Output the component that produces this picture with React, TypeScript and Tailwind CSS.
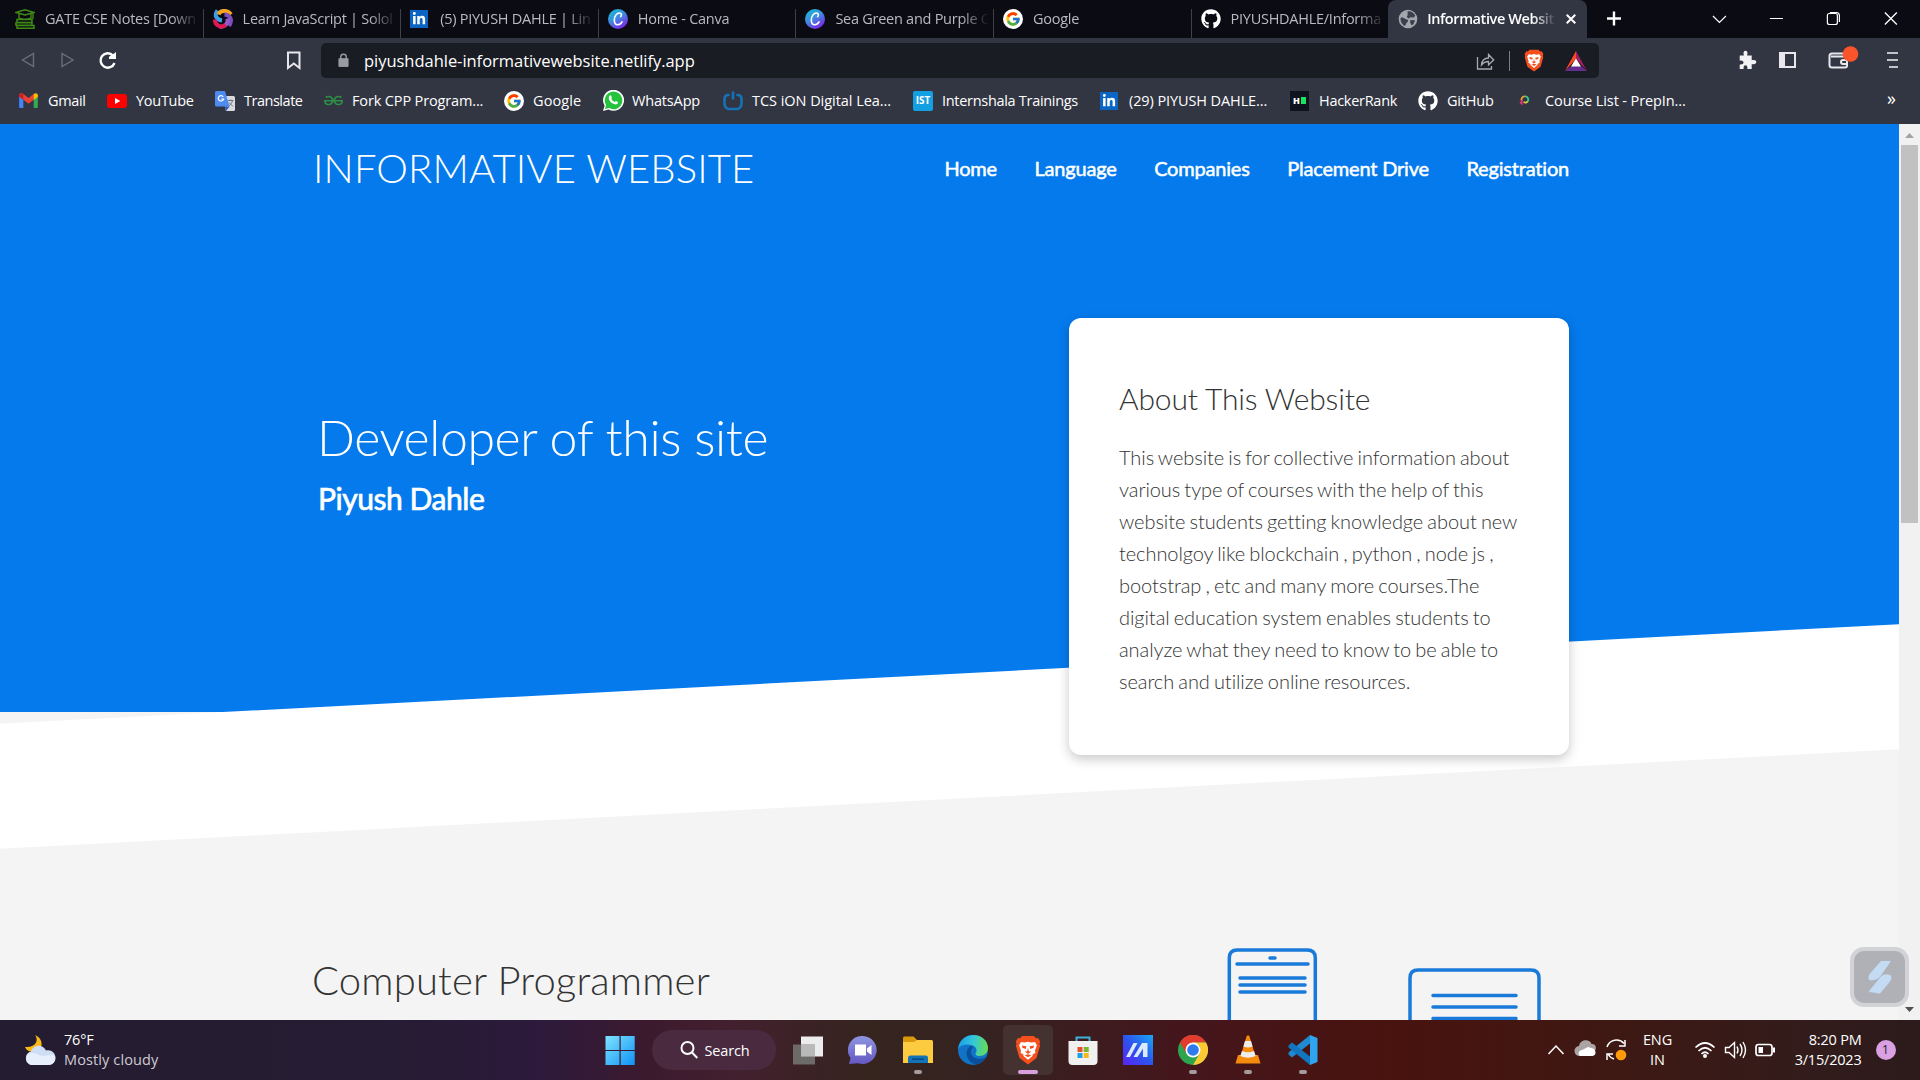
import React, { ReactNode } from "react";
import { FaGithub, FaLinkedinIn } from "react-icons/fa";
import { FcGoogle } from "react-icons/fc";
import { SiGeeksforgeeks } from "react-icons/si";

type P = { className?: string };

const Google = () => (
  <span className="flex size-5 items-center justify-center rounded-full bg-white">
    <FcGoogle className="size-4" />
  </span>
);
const LinkedIn = () => (
  <span className="flex h-[18px] w-[18px] items-center justify-center bg-[#0a66c2] text-white">
    <FaLinkedinIn className="size-[14px]" />
  </span>
);
const Canva = () => (
  <svg viewBox="0 0 20 20" className="size-5">
    <defs>
      <linearGradient id="cv" x1="0" y1="0" x2="0.6" y2="1">
        <stop offset="0" stopColor="#0cc3cc" />
        <stop offset="0.5" stopColor="#3d8fe0" />
        <stop offset="1" stopColor="#7a2ae8" />
      </linearGradient>
    </defs>
    <circle cx="10" cy="10" r="10" fill="url(#cv)" />
    <path d="M12.700 7.700c1.300-1.700.8-3.700-1.200-3.700-2.900 0-5.200 3.400-5.200 7 0 2.800 1.300 4.700 3.500 4.700 1.700 0 3.200-1.100 4.200-2.900" fill="none" stroke="#fff" strokeWidth="1.600" strokeLinecap="round" />
  </svg>
);
const Books = () => (
  <svg viewBox="0 0 20 20" className="size-5" fill="none" stroke="#3f8a14" strokeWidth="1.400">
    <path d="M1 3.500 10 .8l9 2.700-9 2.500zM4 4.600v4.600c3 1.500 9 1.500 12 0V4.600M18 4v6" />
    <path d="M2 10.500h15v3H2zM1 13.700h16v2.600H1zM2 16.500h17v2.800H2z" strokeWidth="1.500" />
  </svg>
);
const Solo = () => (
  <svg viewBox="0 0 20 20" className="size-5" fill="none" strokeWidth="4">
    <path d="M9 11.500C3 10.500 1 6 4.500 1.500" stroke="#3aa0e8" />
    <path d="M5.500 5.500C7 1 14.500 .5 18 5.500" stroke="#f7a420" />
    <path d="M11.500 5.500c6 .5 8.500 5.500 4.500 11.500" stroke="#7b4fc0" />
    <path d="M14.500 9.500c1 5-2.500 8.500-8 8.300" stroke="#9a55c8" />
    <path d="M12.500 15.800C8 19.500 2 16.500 1.800 10.500" stroke="#e0184f" />
  </svg>
);
const Globe = () => (
  <svg viewBox="0 0 20 20" className="size-5">
    <circle cx="10" cy="10" r="9.300" fill="#a3a6ad" />
    <path d="M2.500 9c1.500-1 3.500 0 5 1 2 .3 3.500 1.500 2 3-1.500 1-1.200 2-2 3.200-.8 1-1.500.5-2 0C3.500 14.500 2.300 12 2.500 9zM9.500 2.500c3-.7 6.500 1 7.700 4l-1.200 2-3.500-.3-1.800 1.300-2-1.500 1-2zM12.500 11l4.500.2-1.500 4-2 1-1.500-3z" fill="#3d404c" />
  </svg>
);
const Lion = ({ className }: P) => (
  <svg viewBox="0 0 24 28" className={className}>
    <path d="M6.500 1h11l2 2 1.800-.2L23.500 6l-.8 2 .6 2-3.300 11.500L12 27.500 4 21.500.7 10l.6-2-.8-2 2.200-3.200L4.500 3z" fill="#f4501e" />
    <path d="M5.500 6.500 9 7l3-.8L15 7l3.500-.5L20.300 9.500l-1.800 5.300.5 1.700-3 2 .5.8L12 23l-4.500-3.700.5-.8-3-2 .5-1.700L3.700 9.500z" fill="#fff" />
    <path d="m6.500 9.700 4 .9-.6 2.400-3.200-1zM17.500 9.700l-4 .9.600 2.400 3.200-1zM9 15.500l2.300-.4L12 12l.7 3.100 2.300.4-3 2.200zM8.800 18.800 12 20.800l3.200-2-3.200-.9z" fill="#f4501e" />
  </svg>
);
const Gmail = () => (
  <svg viewBox="0 0 20 16" className="h-[15px] w-[19px]">
    <path d="M0 2v12.500A1.300 1.300 0 0 0 1.300 16H4.500V7z" fill="#4285f4" />
    <path d="M20 2v12.500a1.300 1.300 0 0 1-1.300 1.500H15.500V7z" fill="#34a853" />
    <path d="M0 2.300C0 .3 2.300-.6 3.800.5L10 5.200 16.200.5l-.7 6.800L10 11.400 4.500 7.300 0 4z" fill="#ea4335" />
    <path d="M15.500 1C17.500-.7 20 .3 20 2.300V4l-4.500 3.400z" fill="#fbbc04" />
    <path d="M0 2.300V4l4.500 3.300V1C2.500-.6 0 .3 0 2.300z" fill="#c5221f" />
  </svg>
);
const YouTube = () => (
  <svg viewBox="0 0 20 14" className="h-[14px] w-5">
    <rect width="20" height="14" rx="3" fill="#f00" />
    <path d="m8 4 5.300 3L8 10z" fill="#fff" />
  </svg>
);
const Translate = () => (
  <svg viewBox="0 0 20 20" className="size-5">
    <path d="M7 5h11.500A1.500 1.500 0 0 1 20 6.500v12a1.500 1.500 0 0 1-1.500 1.500H11z" fill="#d7dade" />
    <path d="M1.500 0H10l4.500 15.500h-13A1.500 1.500 0 0 1 0 14V1.500A1.500 1.500 0 0 1 1.500 0z" fill="#4d8bf0" />
    <path d="M11 20l3.500-4.500H9.800z" fill="#2a56b5" />
    <path d="M8.200 5.800A2.700 2.700 0 1 0 8.600 8H6.200" fill="none" stroke="#fff" strokeWidth="1.200" />
    <path d="M13 9.500h5.500M15.700 8.500v1M17.500 9.500c-.4 2.500-2 4-3.300 5M14 11.500l4 4" fill="none" stroke="#6a7280" strokeWidth="1" />
  </svg>
);
const WhatsApp = () => (
  <svg viewBox="0 0 20 20" className="size-[21px]">
    <path d="M0 20l1.500-5A10 10 0 1 1 5.300 18.600z" fill="#fff" />
    <path d="M1.900 18.100l1-3.700a8.400 8.400 0 1 1 2.900 2.800z" fill="#25c33c" />
    <path d="M6.300 5.500c.5-.6 1.200-.5 1.500.1l.7 1.500c.1.400-.6 1-.6 1.300.6 1.400 1.700 2.400 3.200 3 .4 0 1-1 1.300-.9l1.700.9c.4.300.2 1.300-.3 1.700-1.300 1.100-3 .6-4.500-.2-1.700-1-3-2.400-3.600-4.200-.4-1.200-.1-2.500.6-3.200z" fill="#fff" />
  </svg>
);
const Power = () => (
  <svg viewBox="0 0 20 20" className="size-5" fill="none" stroke="#1473b8" strokeWidth="2.600" strokeLinecap="round">
    <path d="M5.500 4Q1.500 4 1.500 8v4c0 4 2 6 5 6h7c3 0 5-2 5-6V8q0-4-4-4M10 1.500v6" />
  </svg>
);
const Prep = () => (
  <svg viewBox="0 0 12 12" className="mx-1 size-[11px]" fill="none" strokeWidth="2">
    <path d="M3 6.500a3.500 3.500 0 0 1 3.500-5" stroke="#f0a030" />
    <path d="M6.500 1.500a3.500 3.500 0 0 1 3 5.500" stroke="#30c890" />
    <path d="M9.500 7A3.500 3.500 0 0 1 5 7.700" stroke="#d8d040" />
    <path d="M3 5.500v4L1 8" stroke="#e03080" />
  </svg>
);

const tabs: { icon: ReactNode; label: string }[] = [
  { icon: <Books />, label: "GATE CSE Notes [Down" },
  { icon: <Solo />, label: "Learn JavaScript | Solol" },
  { icon: <LinkedIn />, label: "(5) PIYUSH DAHLE | Lin" },
  { icon: <Canva />, label: "Home - Canva" },
  { icon: <Canva />, label: "Sea Green and Purple C" },
  { icon: <Google />, label: "Google" },
  { icon: <FaGithub className="size-5 text-white" />, label: "PIYUSHDAHLE/Informa" },
];

const marks: { icon: ReactNode; label: string; w: string; x: string }[] = [
  { icon: <Gmail />, label: "Gmail", x: "w-[88px]", w: "tracking-[-0.35px]" },
  { icon: <YouTube />, label: "YouTube", x: "w-[108px]", w: "tracking-[-0.28px]" },
  { icon: <Translate />, label: "Translate", x: "w-[109px]", w: "tracking-[-0.48px]" },
  { icon: <SiGeeksforgeeks className="size-[19px] text-[#2f8d46]" />, label: "Fork CPP Program...", x: "w-[180px]", w: "ml-[-1px] tracking-[-0.14px]" },
  { icon: <Google />, label: "Google", x: "w-[99px]", w: "tracking-[0.1px]" },
  { icon: <WhatsApp />, label: "WhatsApp", x: "w-[120px]", w: "tracking-[-0.16px]" },
  { icon: <Power />, label: "TCS iON Digital Lea...", x: "w-[190px]", w: "tracking-[-0.04px]" },
  { icon: <span className="flex size-5 items-center justify-center rounded-[2px] bg-[#12a0e2] font-['Open_Sans'] text-[10px] font-bold text-white">IST</span>, label: "Internshala Trainings", x: "w-[187px]", w: "tracking-[-0.3px]" },
  { icon: <LinkedIn />, label: "(29) PIYUSH DAHLE...", x: "w-[190px]", w: "tracking-[-0.1px]" },
  { icon: <span className="flex h-5 w-[19px] items-center justify-center gap-px bg-[#0e141e] font-['Open_Sans'] text-[9px] font-extrabold text-white">H<i className="h-[7px] w-[5px] bg-[#1ae35f]" /></span>, label: "HackerRank", x: "w-[128px]", w: "tracking-[-0.28px]" },
  { icon: <FaGithub className="size-5 text-white" />, label: "GitHub", x: "w-[97px]", w: "tracking-[-0.2px]" },
  { icon: <Prep />, label: "Course List - PrepIn...", x: "w-[190px]", w: "ml-[1px] tracking-[-0.1px]" },
];

function Browser() {
  return (
    <header className="h-[124px] bg-[#323542] font-['Open_Sans',sans-serif] text-[14.500px] text-white">
      <div className="flex h-[38px] bg-[#0b0b14] pl-[6px]">
        {tabs.map((t, i) => (
          <div key={i} className="flex w-[197.600px] shrink-0 items-center pl-[9px]">
            <span className="flex w-[30px] shrink-0 items-center">{t.icon}</span>
            <span className="h-6 w-[154px] overflow-hidden whitespace-nowrap leading-[24px] tracking-[-0.26px] text-[#b9babf] [mask-image:linear-gradient(to_right,#000_82%,transparent)]">{t.label}</span>
            {i < 6 && <span className="ml-auto mt-auto h-[29px] w-px bg-[#3f4149]" />}
          </div>
        ))}
        <div className="-ml-px flex w-[199px] shrink-0 items-center rounded-t-lg bg-[#323542] pl-[10px]">
          <Globe />
          <span className="ml-[9px] h-6 w-[129px] overflow-hidden whitespace-nowrap leading-[24px] font-semibold tracking-[-0.4px] [mask-image:linear-gradient(to_right,#000_82%,transparent)]">Informative Websit</span>
          <svg viewBox="0 0 10 10" className="ml-[10px] size-[10px]" stroke="#fff" strokeWidth="2"><path d="M.7.700l8.600 8.600M9.300.7.700 9.300" /></svg>
        </div>
        <svg viewBox="0 0 333 38" className="h-[38px] w-[333px]" fill="none" stroke="#fff">
          <path d="M20 18.500h14M27 11.500v14" strokeWidth="2.400" />
          <path d="m126 16 6.500 6.500L139 16M183 18.500h13" strokeWidth="1.200" />
          <path d="M240.500 15.500q0-2 2-2h6q2 0 2 2v7q0 2-2 2h-6q-2 0-2-2zM243 12.500h6.500q3 0 3 3V22" strokeWidth="1.200" />
          <path d="m298 12.500 12 12M310 12.500l-12 12" strokeWidth="1.300" />
        </svg>
      </div>
      <div className="flex h-[45px] items-center">
        <svg viewBox="0 0 321 45" className="h-[45px] w-[321px]" fill="none">
          <path d="M33.500 15.500v13l-11-6.500zM62 15.500v13l11-6.500z" stroke="#6b6e79" strokeWidth="1.400" />
          <path d="M113 17.500a7.200 7.200 0 1 0 1.500 7.500" stroke="#fff" strokeWidth="2.400" />
          <path d="M116 14v7h-7a3.500 3.500 0 0 1 3-4z" fill="#fff" />
          <path d="M288 14.500h11.500V30l-5.700-4.500L288 30z" stroke="#e8e8ec" strokeWidth="2" />
        </svg>
        <div className="flex h-[35px] w-[1278px] items-center rounded-[5px] bg-[#191c23]">
          <svg viewBox="0 0 12 15" className="ml-[17px] h-[15px] w-[11px]"><path d="M1 5.500h10V14H1z" fill="#9a9ca4" stroke="#9a9ca4" /><path d="M3 6V3.700a3 3 0 0 1 6 0V6" fill="none" stroke="#9a9ca4" strokeWidth="1.500" /></svg>
          <span className="ml-[15px] pt-px text-[16.500px] tracking-[-0.03px]">piyushdahle-informativewebsite.netlify.app</span>
          <svg viewBox="0 0 18 18" className="ml-auto h-[18px] w-[19px]" fill="none" stroke="#a8abb3" strokeWidth="1.300"><path d="M1 5v12h14v-3M5 13c.5-5 3-7 7-7V2.500l5.200 5.500-5.200 5V9.500c-3 0-5 1-7 3.500z" /></svg>
          <span className="ml-[14px] h-5 w-px bg-[#7b7e87]" />
          <Lion className="ml-[14px] h-[23px] w-5" />
          <svg viewBox="0 0 22 20" className="ml-[21px] mr-[12px] h-5 w-[22px]"><path d="M11 0v8L0 20z" fill="#ff4724" /><path d="M11 0v8l11 12z" fill="#9e1f63" /><path d="M0 20h22l-6.500-5h-9z" fill="#662d91" /><path d="m11 7.500 5 8H6z" fill="#fff" /></svg>
        </div>
        <svg viewBox="0 0 321 45" className="h-[45px] w-[321px]" fill="none">
          <path d="M140 17h4.200c-1-3.200 0-4.700 1.600-4.700s2.600 1.500 1.600 4.700h4.600v4.800c3-.9 4.600.1 4.600 1.800s-1.600 2.700-4.600 1.800v5.100h-4.300c.3-2.500-.5-3.800-1.900-3.800s-2.200 1.300-1.900 3.800H140v-4.600c2.500.3 3.800-.5 3.800-1.900s-1.300-2.200-3.800-1.900z" fill="#f2f2f5" transform="translate(.7,.5)" />
          <path d="M181 15h15v14h-15z" stroke="#e8e8ec" strokeWidth="2" /><path d="M181 15h5v14h-5z" fill="#e8e8ec" />
          <path d="M247 18v-1q0-1.500-2-1.500h-12q-2.500 0-2.500 2.500v9q0 2.500 2.500 2.500h13q2 0 2-2V18.500h-16M248 22h-4q-2 0-2 2t2 2h4" stroke="#e8e8ec" strokeWidth="2" />
          <circle cx="251.500" cy="16" r="7.800" fill="#fb542b" />
          <path d="M288 15h11M288 22h11M290 29h9" stroke="#f2f2f5" strokeWidth="1.700" />
        </svg>
      </div>
      <div className="flex h-[35px] items-center pl-[19px]">
        {marks.map((m, i) => (
          <span key={i} className={"flex shrink-0 items-center " + m.x}>
            <span className="flex w-[29px] shrink-0 items-center">{m.icon}</span>
            <span className={"whitespace-nowrap " + m.w}>{m.label}</span>
          </span>
        ))}
        <span className="ml-auto mr-[24px] pb-1 text-[18px]">»</span>
      </div>
    </header>
  );
}

function Site() {
  return (
    <main className="flex h-[896px] overflow-hidden font-['Lato',sans-serif]">
      <div className="relative w-[1899px] bg-[#f4f4f4]">
        <div className="h-[587.500px] bg-[#047aed] text-white">
          <nav className="mx-auto flex h-[88px] w-[1275px] items-center justify-between pl-px">
            <h1 className="text-[40px] font-light leading-none tracking-[0.13px]">INFORMATIVE WEBSITE</h1>
            <ul className="mr-[18px] flex gap-[37.500px] text-[20px] font-normal tracking-[-0.19px] [-webkit-text-stroke:0.500px_white]">
              {["Home", "Language", "Companies", "Placement Drive", "Registration"].map((n) => (
                <li key={n}>{n}</li>
              ))}
            </ul>
          </nav>
        </div>
        <div className="absolute inset-x-0 top-[550px] h-[125px] -skew-y-3 bg-white" />
        <div className="absolute left-[317px] top-[281px] text-white">
          <h1 className="text-[50px] font-light leading-[64px] tracking-[-0.4px]">Developer of this site</h1>
          <h2 className="mt-[9px] pl-px text-[30px] font-normal leading-[40px] tracking-[-0.45px] [-webkit-text-stroke:0.700px_white]">Piyush Dahle</h2>
        </div>
        <section className="absolute left-[1069px] top-[194px] h-[437px] w-[500px] rounded-[12px] bg-white px-[50px] pt-[56px] text-[#333] shadow-[0_4px_12px_rgba(0,0,0,0.22)]">
          <h2 className="text-[30px] font-light leading-[48px] tracking-[-0.14px]">About This Website</h2>
          <p className="mt-[19px] whitespace-pre text-[20px] font-light leading-8 tracking-[-0.07px] [word-spacing:-1.200px]">{`This website is for collective information about
various type of courses with the help of this
website students getting knowledge about new
technolgoy like blockchain , python , node js ,
bootstrap , etc and many more courses.The
digital education system enables students to
analyze what they need to know to be able to
search and utilize online resources.`}</p>
        </section>
        <div className="flex justify-between pl-[312px] pt-[233px]">
          <h2 className="text-[40px] font-light leading-[70px] tracking-[0.17px] text-[#333]">Computer Programmer</h2>
          <svg viewBox="1220 945 330 80" className="mr-[349px] h-20 w-[330px] shrink-0" fill="none" stroke="#1a7ad9" strokeWidth="3.500" strokeLinecap="round">
            <path d="M1229.300 1035v-77q0-8 8-8h70q8 0 8 8v77M1410 1035v-57q0-8 8-8h113q8 0 8 8v57M1270 958h5M1237 964h71M1240 978h65M1240 985h65M1240 992h65M1433 995.500h83M1433 1007h83M1433 1018.500h83" />
          </svg>
        </div>
        <div className="absolute left-[1850px] top-[823px] flex h-[60px] w-[59px] items-center justify-center rounded-[14px] border-[4px] border-[#d2d3d6] bg-[#afb1b7]">
          <svg viewBox="0 0 26 34" className="h-[34px] w-[26px]"><path d="M14 1h10L15 14Q12 20 3 20.500q-3-2 0-7z" fill="#c3dcf3" /><path d="M24 15q2 3-1 7L13 34 1 32l12-15q4-5 11-2z" fill="#c3dcf3" stroke="#afb1b7" strokeWidth=".7" /></svg>
        </div>
      </div>
      <div className="flex w-[21px] flex-col items-center bg-[#f1f1f1]">
        <svg viewBox="0 0 21 21" className="size-[21px]"><path d="m6 14 4.500-5 4.500 5z" fill="#a3a3a3" /></svg>
        <div className="h-[378px] w-[17px] bg-[#c1c1c1]" />
        <svg viewBox="0 0 21 21" className="mt-auto size-[21px]"><path d="m6 8 4.500 5L15 8z" fill="#505050" /></svg>
      </div>
    </main>
  );
}

const Dot = () => <span className="absolute -bottom-[9px] left-1/2 h-1 w-2 -translate-x-1/2 rounded-full bg-[#a59a9c]" />;
const App30 = ({ children, dot }: { children: ReactNode; dot?: boolean }) => (
  <span className="relative mr-[25px] flex size-[30px] items-center justify-center">
    {children}
    {dot && <Dot />}
  </span>
);

function Taskbar() {
  return (
    <footer className="flex h-[60px] items-center bg-[linear-gradient(90deg,#241c30_0,#261c33_400px,#2d1a3c_540px,#3c1a2e_650px,#43202f_730px,#36241f_860px,#352321_980px,#44161c_1180px,#49130f_1390px,#3f1813_1600px,#331c1b_1800px,#2c1a1c_1920px)] font-['Open_Sans',sans-serif] text-[14.500px] text-white">
      <div className="flex w-[604.500px] items-center pl-6">
        <svg viewBox="0 0 32 32" className="size-8">
          <path d="M11 1c4 5 1 13-10 12 2 6 13 7 16 0 2-5-1-10-6-12z" fill="#fbb917" />
          <path d="M7 31a7 7 0 0 1 0-13.500c2-7 12-8 15-1 6-1.500 9.500 3 9.500 7.500 0 4-3 7-7 7z" fill="#cfdef5" />
          <path d="M7 31a7 7 0 0 1-2-12c7-1 9 3 15 3 4 0 8-2 11 0 1 6-3 9-6.500 9z" fill="#e6effb" />
        </svg>
        <p className="ml-2 leading-5 tracking-[-0.2px]">76°F<br /><span className="tracking-[0.12px] text-[#cfccd4]">Mostly cloudy</span></p>
      </div>
      <App30>
        <svg viewBox="0 0 30 30" className="size-[30px]">
          <defs><linearGradient id="w" x1="0" y1="0" x2="1" y2="1"><stop stopColor="#7fe3ff" /><stop offset="1" stopColor="#1093f5" /></linearGradient></defs>
          <path d="M.5 1h14v14h-14zM15.700 1h14v14h-14zM.5 16h14v14h-14zM15.700 16h14v14h-14z" fill="url(#w)" />
        </svg>
      </App30>
      <div className="-ml-[8px] mr-[17.500px] flex h-[40px] w-[124px] items-center rounded-full bg-[#4a2a3f] pl-[28px]">
        <svg viewBox="0 0 18 18" className="size-[18px]" fill="none" stroke="#fff" strokeWidth="2"><circle cx="7.500" cy="7" r="6" /><path d="m12 11.500 5.300 5.500" /></svg>
        <span className="ml-[7px] pt-px tracking-[-0.15px]">Search</span>
      </div>
      <App30><svg viewBox="0 0 30 30" className="size-[30px]"><path d="M8 1.500h22v20H8z" fill="#ececec" /><path d="M0 9.500h22v20H0z" fill="#777" fillOpacity=".85" /><path d="M8 9.500h14v12H8z" fill="#b9b9b9" /></svg></App30>
      <App30><svg viewBox="0 0 30 30" className="size-[30px]"><defs><linearGradient id="ch" x1="0" y1="0" x2="0" y2="1"><stop stopColor="#8d95e0" /><stop offset="1" stopColor="#6558c4" /></linearGradient></defs><path d="M15 1a14 14 0 1 1-5 27.200L1 29l1.500-6A14 14 0 0 1 15 1z" fill="url(#ch)" /><path d="M7 9.500h11v11H7zM19 13.500l4.500-3.500v10L19 16.500z" fill="#fff" /></svg></App30>
      <App30 dot><svg viewBox="0 0 30 30" className="size-[30px]"><path d="M0 3q0-1.500 1.500-1.500h9L14 5v8H0z" fill="#d99a0b" /><path d="M0 7h11l3-2h14.500Q30 5 30 6.500V28H0z" fill="#fdcb3f" /><path d="M5 28v-5q0-2.500 2.500-2.500h15Q25 20.500 25 23v5z" fill="#1273b8" /><path d="M9 23.300h12v1.700H9z" fill="#0a4b82" /></svg></App30>
      <App30><svg viewBox="0 0 30 30" className="size-[30px]"><defs><linearGradient id="ed" x1="0" y1=".4" x2="1" y2=".5"><stop stopColor="#1a9fe8" /><stop offset=".5" stopColor="#35c7d8" /><stop offset="1" stopColor="#67dd52" /></linearGradient></defs><circle cx="15" cy="15" r="15" fill="#1173c8" /><path d="M0 14C1 5.500 7.500 0 15.500 0 24 0 30 6 30 13c0 5-4 8-8.500 8-3.500 0-4.500-1.500-3.800-2.700 2.300-3.600-.2-7.300-4.200-8.300C8 8.500 2 10 0 14z" fill="url(#ed)" /><path d="M13 11c-4 2-5 6-4 10 1.200 5 6 8.500 10 8.300A15 15 0 0 0 28 22c-7 4-15 1-15-5 0-2.500 1-4 2.500-5z" fill="#0b4f9c" /></svg></App30>
      <span className="relative -ml-[10px] mr-[15px] flex size-[50px] items-center justify-center rounded-[5px] bg-[#43322f]">
        <Lion className="h-[30px] w-[26px]" />
        <span className="absolute bottom-px left-[15px] h-1 w-5 rounded-full bg-[#d9a0de]" />
      </span>
      <App30><svg viewBox="0 0 30 30" className="size-[30px]"><path d="M8.500 7V2.500h13V7" fill="none" stroke="#3fb0d8" strokeWidth="2" /><path d="M.5 6h29v20q0 4-4 4h-21q-4 0-4-4z" fill="#f1f0f0" /><path d="M9.500 12h5v5h-5z" fill="#e8502c" /><path d="M15.700 12h5v5h-5z" fill="#7fb432" /><path d="M9.500 18h5v5h-5z" fill="#1ea0e4" /><path d="M15.700 18h5v5h-5z" fill="#f8b81c" /></svg></App30>
      <App30><svg viewBox="0 0 30 30" className="size-[30px]"><defs><linearGradient id="as" x1="0" y1="1" x2="1" y2="0"><stop stopColor="#5b22f2" /><stop offset=".5" stopColor="#2b55ee" /><stop offset="1" stopColor="#1aa8f2" /></linearGradient></defs><path d="M0 0h30v30H0z" fill="url(#as)" /><path d="m3 22 7.500-14h4L7 22zM10.500 22 19 8h5.500v14H20v-8.500L14.500 22z" fill="#dce9fb" /></svg></App30>
      <App30 dot><svg viewBox="0 0 30 30" className="size-[30px]"><circle cx="15" cy="15" r="15" fill="#2da44e" /><path d="M2 7.500A15 15 0 0 1 28 7.500H15L8.500 18.700z" fill="#e33b2e" /><path d="M28 7.500A15 15 0 0 1 15 30l6.500-11.300L21.500 11 15 7.500z" fill="#fcc934" /><circle cx="15" cy="15" r="7.500" fill="#fff" /><circle cx="15" cy="15" r="5.800" fill="#2f7bed" /></svg></App30>
      <App30 dot><svg viewBox="0 0 30 30" className="size-[30px]"><path d="M5 20h20l2.500 8.500h-25z" fill="#f58a0c" /><path d="m13.500 1.500 1.500-1.500 1.500 1.500L23 23q-8 4-16 0z" fill="#f58a0c" /><path d="m12 6 6 0 1.600 5.500q-4.600 2-9.200 0zM9 16q6 2.500 12 0l1.700 5q-7.700 3.500-15.400 0z" fill="#ececec" /></svg></App30>
      <App30 dot><svg viewBox="0 0 30 30" className="size-[30px]"><path d="M22 0v8.500L4 22.500l-3.500-3v-2z" fill="#1f8ad2" /><path d="M22 30v-8.500L4 7.500l-3.500 3v2z" fill="#1176bd" /><path d="m22 0 7.500 3v24L22 30z" fill="#30a4ee" /></svg></App30>
      <div className="ml-auto flex items-center">
        <svg viewBox="1540 1020 90 60" className="h-[60px] w-[90px]" fill="none" stroke="#fff" strokeWidth="1.500">
          <path d="m1547.500 1054 7.500-8 7.500 8" />
          <path d="M1579 1056a5 5 0 0 1-1-10c1-7 11-7.500 12.500-2 4-.5 5 3 4 6z" fill="#aaa4a4" stroke="none" />
          <path d="M1579 1056c-3-2-1-5.500 2-6l6-3 5 1.500c3 1 4 7-.5 7.500z" fill="#fff" stroke="none" />
          <path d="M1606 1047a10 10 0 0 1 17-3.500M1624 1040v6h-6M1607 1054a10 10 0 0 0 6 5M1606 1060v-6h6" />
          <circle cx="1620" cy="1055" r="5.300" fill="#ff9a0a" stroke="none" />
        </svg>
        <p className="ml-[12px] w-[30px] text-center leading-5 tracking-[-0.1px]">ENG<br />IN</p>
        <svg viewBox="1690 1020 90 60" className="ml-[17px] h-[60px] w-[90px]" fill="none" stroke="#fff" strokeWidth="1.700">
          <path d="M1695.500 1047.500q9.500-9 19 0M1698.500 1051q6.500-6.500 13 0M1701.500 1054q3.500-3.500 7 0" /><circle cx="1705" cy="1056" r="2" fill="#fff" stroke="none" />
          <path d="M1725.500 1047.500h3.500l5.500-5v15l-5.500-5h-3.500zM1737 1046.500q2 3.500 0 7M1740 1044q4 6 0 12M1743 1042q5 8 0 16" strokeWidth="1.400" />
          <rect x="1756" y="1044.500" width="16" height="11" rx="2.500" /><path d="M1758.500 1047h4.500v6h-4.500z" fill="#fff" stroke="none" /><path d="M1774 1047.500v5" strokeWidth="2" />
        </svg>
        <p className="ml-[10px] w-[72px] whitespace-nowrap text-right leading-5 tracking-[-0.2px]">8:20 PM<br />3/15/2023</p>
        <span className="ml-[14px] mr-[24.500px] flex size-5 items-center justify-center rounded-full bg-[#d9a0e2] text-[12px] text-[#2a1a2a]">1</span>
      </div>
    </footer>
  );
}

export default function App() {
  return (
    <div className="h-[1080px] w-[1920px] overflow-hidden">
      <Browser />
      <Site />
      <Taskbar />
    </div>
  );
}
